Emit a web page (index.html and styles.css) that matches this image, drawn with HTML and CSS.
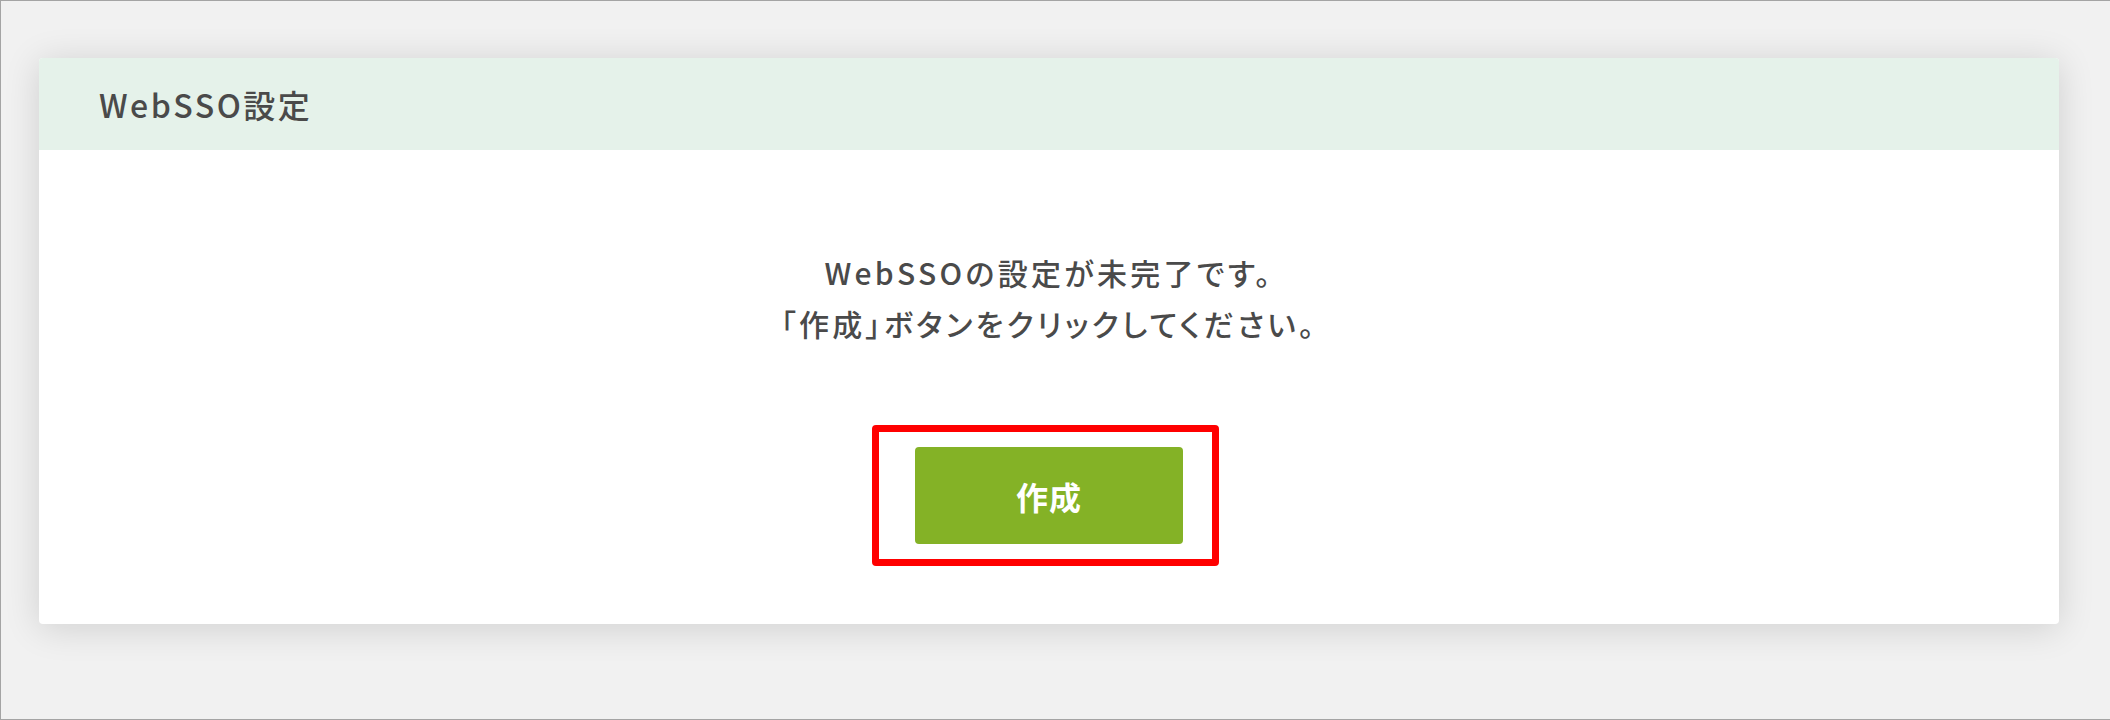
FILE: index.html
```html
<!DOCTYPE html>
<html lang="ja">
<head>
<meta charset="utf-8">
<title>WebSSO設定</title>
<link rel="stylesheet" href="styles.css">
</head>
<body>
<div class="page">
  <section class="card">
    <header class="card-header">
      <h1 class="card-title">WebSSO設定</h1>
    </header>
    <div class="card-body">
      <p class="message">WebSSOの設定が未完了です。<br>「作成」ボタンをクリックしてください。</p>
      <div class="action">
        <button class="btn-create" type="button">作成</button>
        <span class="highlight"></span>
      </div>
    </div>
  </section>
</div>
</body>
</html>
```

FILE: styles.css
```css
html, body {
  margin: 0;
  padding: 0;
}
body {
  width: 2110px;
  height: 720px;
  box-sizing: border-box;
  background: #f1f1f1;
  border-top: 1px solid #a4a4a4;
  border-left: 1px solid #a4a4a4;
  border-bottom: 1px solid #a4a4a4;
  font-family: "Noto Sans CJK JP", "Noto Sans", sans-serif;
  color: #4a4a4a;
  overflow: hidden;
}
.page {
  padding: 57px 51px 0 38px;
}
.card {
  background: #ffffff;
  border-radius: 4px;
  box-shadow: 0 4px 36px rgba(0, 0, 0, 0.14);
}
.card-header {
  height: 92px;
  background: #e5f2ea;
  border-radius: 4px 4px 0 0;
  display: flex;
  align-items: center;
  padding-left: 60px;
}
.card-title {
  margin: 0;
  font-size: 32px;
  font-weight: 500;
  letter-spacing: 2.5px;
  font-feature-settings: "palt";
  color: #4a4a4a;
}
.card-body {
  height: 474px;
  box-sizing: border-box;
  padding-top: 97px;
  display: flex;
  flex-direction: column;
  align-items: center;
}
.message {
  margin: 0;
  font-size: 30px;
  font-weight: 500;
  line-height: 51px;
  letter-spacing: 3.3px;
  font-feature-settings: "palt";
  text-align: center;
  color: #4a4a4a;
}
.action {
  position: relative;
  margin-top: 98px;
}
.btn-create {
  display: block;
  width: 268px;
  height: 97px;
  border: 0;
  border-radius: 4px;
  background: #84b226;
  color: #ffffff;
  font-family: "Noto Sans CJK JP", "Noto Sans", sans-serif;
  font-size: 32px;
  font-weight: 700;
  letter-spacing: 1px;
  padding: 0;
}
.highlight {
  position: absolute;
  left: -43px;
  top: -22px;
  width: 347px;
  height: 141px;
  box-sizing: border-box;
  border: 7px solid #ff0000;
  border-radius: 4px;
  pointer-events: none;
}
```
